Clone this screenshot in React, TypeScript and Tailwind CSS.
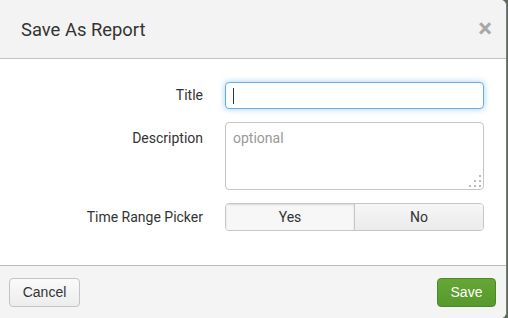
import { useState } from "react";

const labelFont = { fontFamily: "Roboto, 'Liberation Sans', sans-serif" };

const App = () => {
  const [timePicker, setTimePicker] = useState<"yes" | "no">("yes");

  return (
    <div className="w-[508px] h-[318px] bg-[#5d6b57] overflow-hidden" style={labelFont}>
      <div className="w-[507px] h-[318px] flex flex-col bg-white rounded-r-[6px] border-r border-[#7a7a7a] overflow-hidden">
        {/* Header */}
        <div className="h-[59px] flex-shrink-0 flex items-center justify-between pl-[21px] pr-[14px] bg-[#f3f3f3] border-b border-[#c3c3c3]">
          <h3 className="text-[18.4px] text-[#333] pt-[1px]">Save As Report</h3>
          <button className="text-[26px] leading-none font-bold text-[#a8a8a8] pb-[3px]">×</button>
        </div>

        {/* Body */}
        <div className="flex-1 flex flex-col gap-[13px] pt-[23px] pl-[20px] pr-[22px] text-[14px] text-[#333]">
          <div className="flex items-center gap-[22px]">
            <label className="w-[183px] text-right">Title</label>
            <div className="flex-1 h-[27px] rounded-[4px] border border-[#66afe9] bg-white shadow-[0_0_6px_rgba(102,175,233,0.6)] flex items-center pl-[7px]">
              <span className="w-px h-[16px] bg-[#333]" />
            </div>
          </div>
          <div className="flex items-start gap-[22px]">
            <label className="w-[183px] text-right pt-[6px]">Description</label>
            <div className="relative flex-1 h-[68px] rounded-[4px] border border-[#c6c6c6] bg-white pl-[7px] pt-[5px] text-[#999]">
              optional
              <svg className="absolute right-[2px] bottom-[2px]" width="12" height="12" viewBox="0 0 12 12">
                <rect x="10" y="0" width="2" height="2" fill="#bbb" />
                <rect x="5" y="5" width="2" height="2" fill="#bbb" />
                <rect x="10" y="5" width="2" height="2" fill="#bbb" />
                <rect x="0" y="10" width="2" height="2" fill="#bbb" />
                <rect x="5" y="10" width="2" height="2" fill="#bbb" />
                <rect x="10" y="10" width="2" height="2" fill="#bbb" />
              </svg>
            </div>
          </div>
          <div className="flex items-center gap-[22px]">
            <label className="w-[183px] text-right">Time Range Picker</label>
            <div className="flex-1 h-[28px] flex rounded-[4px] border border-[#c6c6c6] overflow-hidden">
              <button
                onClick={() => setTimePicker("yes")}
                className={`flex-1 border-r border-[#c6c6c6] ${
                  timePicker === "yes"
                    ? "bg-[#f7f7f7] shadow-[inset_0_1px_2px_rgba(0,0,0,0.12)]"
                    : "bg-gradient-to-b from-[#f8f8f8] to-[#ececec]"
                }`}
              >
                Yes
              </button>
              <button
                onClick={() => setTimePicker("no")}
                className={`flex-1 ${
                  timePicker === "no"
                    ? "bg-[#f7f7f7] shadow-[inset_0_1px_2px_rgba(0,0,0,0.12)]"
                    : "bg-gradient-to-b from-[#f6f6f6] to-[#ebebeb]"
                }`}
              >
                No
              </button>
            </div>
          </div>
        </div>

        {/* Footer */}
        <div className="h-[53px] flex-shrink-0 flex items-center justify-between pl-[9px] pr-[10px] bg-[#f4f4f4] border-t border-[#bcbcbc] text-[14px]" style={{ fontFamily: "'Liberation Sans', Arial, sans-serif" }}>
          <button className="w-[71px] h-[29px] rounded-[4px] border border-[#c3c3c3] bg-gradient-to-b from-[#fafafa] to-[#ededed] text-[#333]">
            Cancel
          </button>
          <button className="w-[59px] h-[29px] rounded-[4px] border border-[#4a8a25] bg-gradient-to-b from-[#65a637] to-[#58992d] text-white">
            Save
          </button>
        </div>
      </div>
    </div>
  );
};

export default App;
